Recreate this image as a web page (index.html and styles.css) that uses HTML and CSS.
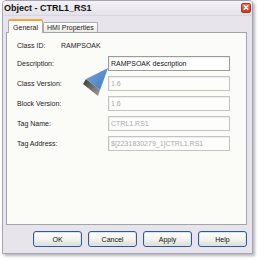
FILE: index.html
```html
<!DOCTYPE html>
<html>
<head>
<meta charset="utf-8">
<link rel="stylesheet" href="styles.css">
</head>
<body>
<div class="screen">
  <div class="window">
    <div class="titlebar">
      <span class="title">Object - CTRL1_RS1</span>
      <span class="close"><svg width="9" height="9" viewBox="0 0 9 9"><path d="M2.5 2.5 L6.5 6.5 M6.5 2.5 L2.5 6.5" stroke="#fff" stroke-width="1.6" stroke-linecap="round"/></svg></span>
    </div>
    <div class="content">
      <div class="tabs">
        <div class="tab active">General</div>
        <div class="tab">HMI Properties</div>
      </div>
      <div class="panel">
        <div class="row info"><span class="label">Class ID:</span><span class="value">RAMPSOAK</span></div>
        <div class="row"><span class="label">Description:</span><div class="input enabled">RAMPSOAK description</div></div>
        <div class="row"><span class="label">Class Version:</span><div class="input">1.6</div></div>
        <div class="row"><span class="label">Block Version:</span><div class="input">1.6</div></div>
        <div class="row"><span class="label">Tag Name:</span><div class="input">CTRL1.RS1</div></div>
        <div class="row"><span class="label">Tag Address:</span><div class="input">$[2231830279_1]CTRL1.RS1</div></div>
      </div>
      <div class="buttons">
        <div class="btn">OK</div>
        <div class="btn">Cancel</div>
        <div class="btn">Apply</div>
        <div class="btn">Help</div>
      </div>
    </div>
  </div>
  <svg class="callout" width="264" height="261" viewBox="0 0 264 261">
    <defs>
      <linearGradient id="bl" x1="0" y1="0" x2="1" y2="1">
        <stop offset="0" stop-color="#76a6dc"/>
        <stop offset="1" stop-color="#4479bd"/>
      </linearGradient>
      <linearGradient id="gr" x1="0" y1="0" x2="1" y2="1">
        <stop offset="0" stop-color="#3a3a3a"/>
        <stop offset="1" stop-color="#a0a0a0"/>
      </linearGradient>
    </defs>
    <polygon points="86,79 100,90 98,96 83,84" fill="url(#gr)"/>
    <polygon points="108,68 86,79 100,90" fill="url(#bl)"/>
  </svg>
</div>
</body>
</html>
```

FILE: styles.css
```css
* { box-sizing: border-box; }
html, body { margin: 0; padding: 0; background: #ffffff; }
body { font-family: "Liberation Sans", Arial, sans-serif; font-size: 7px; color: #1a1a1a; }
.screen { position: relative; width: 264px; height: 261px; }
.window {
  margin-left: 2px;
  width: 251px;
  height: 254px;
  border: 1px solid #a6a3b3;
  border-radius: 4px 4px 0 0;
  background: #e7e4eb;
  box-shadow: 2px 2px 3px rgba(90, 90, 110, 0.45);
  display: flex;
  flex-direction: column;
}
.titlebar {
  height: 15px;
  display: flex;
  align-items: center;
  justify-content: space-between;
  padding: 0 1px 0 1px;
  background: linear-gradient(#f4f2f6, #e4e1e9);
  border-bottom: 1px solid #d8d5de;
  border-radius: 3px 3px 0 0;
}
.title { font-weight: bold; font-size: 9px; color: #111; letter-spacing: 0; }
.close {
  width: 10px; height: 10px;
  border-radius: 2px;
  background: linear-gradient(#ec7a62, #c8391f);
  border: 1px solid #a63822;
  display: flex; align-items: center; justify-content: center;
  margin-top: -1px;
}
.close svg { display: block; }
.content { padding: 3px 5px 5px 3px; display: flex; flex-direction: column; }
.tabs { display: flex; align-items: flex-end; height: 13px; padding-left: 2px; position: relative; z-index: 1; }
.tab {
  height: 10px;
  padding: 0 3px;
  border: 1px solid #a9adae;
  border-bottom: none;
  border-radius: 2px 2px 0 0;
  background: linear-gradient(#ffffff, #eceae4);
  display: flex; align-items: center;
  font-size: 7px;
  color: #222;
}
.tab.active {
  height: 14px;
  width: 35px;
  justify-content: center;
  background: #fbfbf9;
  border-top: 2px solid #f0a43a;
  margin-bottom: -1px;
}
.panel {
  height: 193px;
  border: 1px solid #a0a6a8;
  background: #fbfbf8;
  padding: 5px 16px 0 10px;
  display: flex;
  flex-direction: column;
  gap: 5px;
}
.row { display: grid; grid-template-columns: 91px 1fr; height: 15px; align-items: center; }
.row.info { grid-template-columns: 44px 1fr; margin-bottom: -2px; }
.label { color: #222; }
.value { color: #222; }
.input {
  height: 15px;
  border: 1px solid #c4c3c0;
  box-shadow: inset 1px 1px 0 #eeeeee;
  background: #fdfdfc;
  color: #a9a9a9;
  padding-left: 2px;
  display: flex; align-items: center;
  white-space: nowrap;
}
.input.enabled { border-color: #9b9b98; color: #111; background: #ffffff; }
.buttons { display: flex; justify-content: flex-end; gap: 6px; margin-top: 6px; }
.btn {
  width: 49px; height: 16px;
  border: 1px solid #2f5a93;
  border-radius: 3px;
  background: linear-gradient(#ffffff, #f0f0ec 60%, #dcdcd6);
  box-shadow: inset 0 0 0 1px #d9e4f2;
  display: flex; align-items: center; justify-content: center;
  color: #111;
}
.callout { position: absolute; left: 0; top: 0; pointer-events: none; }
```
